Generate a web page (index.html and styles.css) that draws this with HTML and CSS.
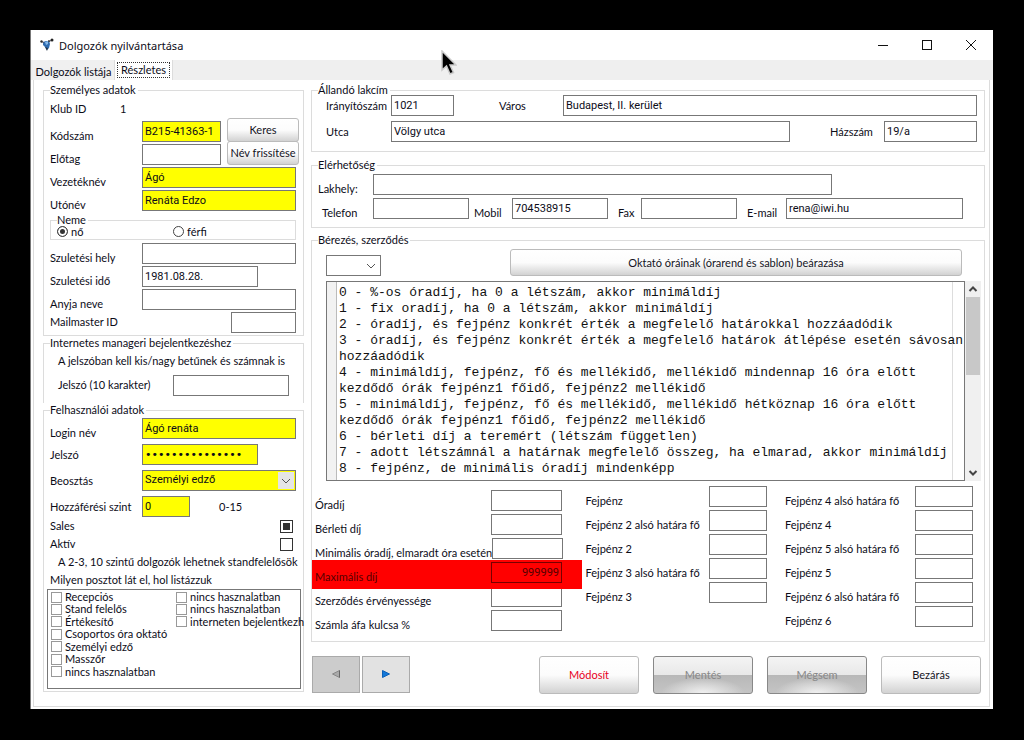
FILE: index.html
```html
<!DOCTYPE html>
<html lang="hu">
<head>
<meta charset="utf-8">
<title>Dolgozók nyilvántartása</title>
<link rel="stylesheet" href="styles.css">
</head>
<body>
<main class="window">
  <header class="titlebar">
    <svg class="app-icon" width="14" height="14" viewBox="0 0 14 14" aria-hidden="true">
      <path d="M3 4l3-1 3 0 1 3-1 4-2 2-2-3-2-2z" fill="#2f6cb0"/>
      <path d="M5 4l3-1 0 3-2 1z" fill="#86b8e8"/>
      <path d="M1 3.500l3 1M9 4l3-2.500" stroke="#556" fill="none"/>
      <circle cx="1.500" cy="3.500" r="1.200" fill="#333"/><circle cx="12" cy="2" r="1.500" fill="#222"/><circle cx="9" cy="3" r="1" fill="#444"/>
      <path d="M5 9l2 4 1-3z" fill="#234"/>
    </svg>
    <h1 class="title">Dolgozók nyilvántartása</h1>
    <div class="window-buttons">
      <button class="winbtn" type="button" aria-label="Kis méret"><svg width="12" height="12" viewBox="0 0 12 12"><path d="M1 6.500h10" stroke="#111" fill="none"/></svg></button>
      <button class="winbtn" type="button" aria-label="Teljes méret"><svg width="12" height="12" viewBox="0 0 12 12"><rect x="1.500" y="1.500" width="9" height="9" stroke="#111" fill="none"/></svg></button>
      <button class="winbtn" type="button" aria-label="Ablak bezárása"><svg width="12" height="12" viewBox="0 0 12 12"><path d="M1 1l10 10M11 1L1 11" stroke="#111" fill="none"/></svg></button>
    </div>
  </header>
  <nav class="tabs" role="tablist">
    <button class="tab" type="button" role="tab">Dolgozók listája</button>
    <button class="tab active" type="button" role="tab" aria-selected="true"><span class="tab-focus">Részletes</span></button>
  </nav>
  <form class="page" autocomplete="off">
    <div class="left">
      <fieldset class="group">
        <legend>Személyes adatok</legend>
        <div class="row club"><span class="label">Klub ID</span><span class="club-id">1</span></div>
        <div class="row low"><label class="label" for="kod">Kódszám</label><input id="kod" class="field code yellow" value="B215-41363-1"><button class="btn small" type="button">Keres</button></div>
        <div class="row low"><label class="label" for="elo">Előtag</label><input id="elo" class="field code"><button class="btn small" type="button">Név frissítése</button></div>
        <div class="row low"><label class="label" for="vez">Vezetéknév</label><input id="vez" class="field grow yellow" value="Ágó"></div>
        <div class="row low"><label class="label" for="uto">Utónév</label><input id="uto" class="field grow yellow" value="Renáta Edzo"></div>
        <fieldset class="group gender">
          <legend>Neme</legend>
          <label class="radio-item"><input class="radio" type="radio" name="neme" checked>nő</label>
          <label class="radio-item"><input class="radio" type="radio" name="neme">férfi</label>
        </fieldset>
        <div class="row low"><label class="label" for="hely">Szuletési hely</label><input id="hely" class="field grow"></div>
        <div class="row low"><label class="label" for="ido">Szuletési idő</label><input id="ido" class="field medium" value="1981.08.28."></div>
        <div class="row low"><label class="label" for="anya">Anyja neve</label><input id="anya" class="field grow"></div>
        <div class="row between"><label class="label" for="mail">Mailmaster ID</label><input id="mail" class="field tiny"></div>
      </fieldset>
      <fieldset class="group internet">
        <legend>Internetes manageri bejelentkezéshez</legend>
        <p class="note">A jelszóban kell kis/nagy betűnek és számnak is</p>
        <div class="row between web-password"><label for="jel10">Jelszó (10 karakter)</label><input id="jel10" class="field medium"></div>
      </fieldset>
      <fieldset class="group user">
        <legend>Felhasználói adatok</legend>
        <div class="user-rows">
          <div class="row low"><label class="label" for="login">Login név</label><input id="login" class="field grow yellow" value="Ágó renáta"></div>
          <div class="row"><label class="label" for="pw">Jelszó</label><input id="pw" type="password" class="field medium yellow password" value="123456789012345"></div>
          <div class="row"><label class="label" for="beo">Beosztás</label><span class="combo grow"><select id="beo" class="field yellow"><option>Személyi edző</option></select><svg class="chevron boxed" width="16" height="17" viewBox="0 0 16 17"><path d="M4 7l4 4 4-4" stroke="#555" fill="none"/></svg></span></div>
          <div class="row"><label class="label" for="szint">Hozzáférési szint</label><input id="szint" class="field level yellow" value="0"><span class="range">0-15</span></div>
        </div>
        <label class="check-row">Sales<input class="check large filled" type="checkbox"></label>
        <label class="check-row">Aktív<input class="check large" type="checkbox"></label>
        <p class="note line">A 2-3, 10 szintű dolgozók lehetnek standfelelősök</p>
        <p class="line">Milyen posztot lát el, hol listázzuk</p>
        <div class="posts">
          <label class="post"><input class="check" type="checkbox">Recepciós</label>
          <label class="post"><input class="check" type="checkbox">Stand felelős</label>
          <label class="post"><input class="check" type="checkbox">Értékesítő</label>
          <label class="post"><input class="check" type="checkbox">Csoportos óra oktató</label>
          <label class="post"><input class="check" type="checkbox">Személyi edző</label>
          <label class="post"><input class="check" type="checkbox">Masszőr</label>
          <label class="post"><input class="check" type="checkbox">nincs hasznalatban</label>
          <label class="post"><input class="check" type="checkbox">nincs hasznalatban</label>
          <label class="post"><input class="check" type="checkbox">nincs hasznalatban</label>
          <label class="post"><input class="check" type="checkbox">interneten bejelentkezh</label>
        </div>
      </fieldset>
    </div>

    <div class="right">
      <fieldset class="group address">
        <legend>Állandó lakcím</legend>
        <div class="row">
          <label class="address-label" for="irsz">Irányítószám</label><input id="irsz" class="field zip" value="1021">
          <label class="city-label" for="varos">Város</label><input id="varos" class="field grow" value="Budapest, II. kerület">
        </div>
        <div class="row">
          <label class="address-label" for="utca">Utca</label><input id="utca" class="field grow" value="Völgy utca">
          <label class="house-label" for="haz">Házszám</label><input id="haz" class="field house" value="19/a">
        </div>
      </fieldset>
      <fieldset class="group contact">
        <legend>Elérhetőség</legend>
        <div class="row low home"><label class="contact-label" for="lak">Lakhely:</label><input id="lak" class="field grow"></div>
        <div class="row low phones">
          <label class="contact-label phone" for="tel">Telefon</label><input id="tel" class="field number">
          <label class="mobile-label" for="mob">Mobil</label><input id="mob" class="field number" value="704538915">
          <label class="fax-label" for="fax">Fax</label><input id="fax" class="field number">
          <label class="email-label" for="email">E-mail</label><input id="email" class="field grow" value="rena@iwi.hu">
        </div>
      </fieldset>
      <fieldset class="group wages">
        <legend>Bérezés, szerződés</legend>
        <div class="wage-head">
          <span class="combo mode"><select class="field" aria-label="Bérezés módja"><option></option></select><svg class="chevron" width="16" height="17" viewBox="0 0 16 17"><path d="M4 7l4 4 4-4" stroke="#555" fill="none"/></svg></span>
          <button class="btn price" type="button">Oktató óráinak (órarend és sablon) beárazása</button>
        </div>
        <div class="memo">
          <textarea class="memo-text" aria-label="Bérezési módok" readonly wrap="off">0 - %-os óradíj, ha 0 a létszám, akkor minimáldíj
1 - fix oradíj, ha 0 a létszám, akkor minimáldíj
2 - óradíj, és fejpénz konkrét érték a megfelelő határokkal hozzáadódik
3 - óradíj, és fejpénz konkrét érték a megfelelő határok átlépése esetén sávosan
hozzáadódik
4 - minimáldíj, fejpénz, fő és mellékidő, mellékidő mindennap 16 óra előtt
kezdődő órák fejpénz1 főidő, fejpénz2 mellékidő
5 - minimáldíj, fejpénz, fő és mellékidő, mellékidő hétköznap 16 óra előtt
kezdődő órák fejpénz1 főidő, fejpénz2 mellékidő
6 - bérleti díj a teremért (létszám független)
7 - adott létszámnál a határnak megfelelő összeg, ha elmarad, akkor minimáldíj
8 - fejpénz, de minimális óradíj mindenképp</textarea>
          <div class="scrollbar" aria-hidden="true">
            <svg width="16" height="16" viewBox="0 0 16 16"><path d="M4.500 10L8 6.500l3.500 3.500" stroke="#444" stroke-width="2" fill="none"/></svg>
            <span class="thumb"></span>
            <svg class="scroll-down" width="16" height="16" viewBox="0 0 16 16"><path d="M4.500 6L8 9.500 11.500 6" stroke="#444" stroke-width="2" fill="none"/></svg>
          </div>
        </div>
        <div class="rates">
          <div class="rate-col first">
            <div class="rate"><label for="r1">Óradíj</label><input id="r1" class="field"></div>
            <div class="rate"><label for="r2">Bérleti díj</label><input id="r2" class="field"></div>
            <div class="rate"><label for="r3">Minimális óradíj, elmaradt óra esetén</label><input id="r3" class="field"></div>
            <div class="rate alert"><label for="r4">Maximális díj</label><input id="r4" class="field" value="999999"></div>
            <div class="rate"><label for="r5">Szerződés érvényessége</label><input id="r5" class="field"></div>
            <div class="rate"><label for="r6">Számla áfa kulcsa %</label><input id="r6" class="field"></div>
          </div>
          <div class="rate-col second">
            <div class="rate"><label for="f1">Fejpénz</label><input id="f1" class="field"></div>
            <div class="rate"><label for="f2">Fejpénz 2 alsó határa fő</label><input id="f2" class="field"></div>
            <div class="rate"><label for="f3">Fejpénz 2</label><input id="f3" class="field"></div>
            <div class="rate"><label for="f4">Fejpénz 3 alsó határa fő</label><input id="f4" class="field"></div>
            <div class="rate"><label for="f5">Fejpénz 3</label><input id="f5" class="field"></div>
          </div>
          <div class="rate-col">
            <div class="rate"><label for="g1">Fejpénz 4 alsó határa fő</label><input id="g1" class="field"></div>
            <div class="rate"><label for="g2">Fejpénz 4</label><input id="g2" class="field"></div>
            <div class="rate"><label for="g3">Fejpénz 5 alsó határa fő</label><input id="g3" class="field"></div>
            <div class="rate"><label for="g4">Fejpénz 5</label><input id="g4" class="field"></div>
            <div class="rate"><label for="g5">Fejpénz 6 alsó határa fő</label><input id="g5" class="field"></div>
            <div class="rate"><label for="g6">Fejpénz 6</label><input id="g6" class="field"></div>
          </div>
        </div>
      </fieldset>
      <div class="footer">
        <div class="pager">
          <button class="nav-btn off" type="button" aria-label="Előző" disabled><svg width="10" height="10" viewBox="0 0 10 10"><path d="M8.500 1.500v7L1.500 5z" fill="#aaa" stroke="#888"/><path d="M8.500 1.500v7" stroke="#666"/></svg></button>
          <button class="nav-btn" type="button" aria-label="Következő"><svg width="10" height="10" viewBox="0 0 10 10"><path d="M1.500 1.500v7L8.500 5z" fill="#1277d8" stroke="#0a60b8"/></svg></button>
        </div>
        <div class="actions">
          <button class="btn action modify" type="button">Módosít</button>
          <button class="btn action" type="button" disabled>Mentés</button>
          <button class="btn action" type="button" disabled>Mégsem</button>
          <button class="btn action" type="button">Bezárás</button>
        </div>
      </div>
    </div>
  </form>
  <svg class="cursor" width="16" height="26" viewBox="0 0 16 26" aria-hidden="true"><path d="M1 1v19l4.500-4 3.500 8 3.500-1.500L9 15h6z" fill="#000" stroke="#ccc" stroke-width="1.500"/></svg>
</main>
</body>
</html>
```
FILE: styles.css
```css
* { box-sizing: border-box; }

body {
  margin: 0;
  min-height: 100vh;
  padding: 30px 31px 31px 30px;
  display: flex;
  background: #000;
  color: #0c0c18;
  font: 11px/14px Lato, "Noto Sans", sans-serif;
}

p { margin: 0; }
input, select, button, textarea { margin: 0; font: inherit; color: inherit; }
label, .label, p, legend, button { white-space: nowrap; }

.window {
  position: relative;
  flex: 1;
  min-width: 0;
  display: flex;
  flex-direction: column;
  background: #fff;
  border-left: 1px solid #777;
}

.titlebar { display: flex; align-items: center; height: 30px; padding-left: 9px; }
.title { margin: 0 auto 0 5px; padding-top: 2px; font: 400 11px/14px "Noto Sans", "Open Sans", sans-serif; }
.window-buttons { display: flex; }
.winbtn {
  display: flex;
  align-items: center;
  justify-content: center;
  width: 44px;
  height: 30px;
  padding: 0;
  border: 0;
  background: none;
}

.tabs { display: flex; height: 20px; padding-left: 2px; background: #efefef; }
.tab { width: 82px; padding: 3px 0 0; border: 1px solid #dcdcdc; border-width: 0 1px 0 0; background: #f0f0f0; }
.tab.active { width: 58px; padding: 1px 2px; background: #fff; }
.tab-focus { display: block; border: 1px dotted #333; }

.page {
  flex: 1;
  display: flex;
  gap: 7px;
  margin: 0 3px 2px 2px;
  padding: 3px 4px 4px 9px;
  border: 1px solid #dcdcdc;
  border-top: 0;
}
.left { width: 261px; flex: none; }
.right { flex: 1; min-width: 0; }

.group {
  min-width: 0;
  margin: 0;
  padding: 0 7px 0 6px;
  border: 1px solid #dcdcdc;
}
.group > legend { height: 14px; padding: 0 2px 0 0; }

.row { display: flex; align-items: center; }
.row.low { align-items: flex-start; height: 23px; }
.row.low > label { padding-top: 8px; }
.row.between { justify-content: space-between; height: 23px; align-items: flex-start; }
.row.between > label { padding-top: 3px; }
.label { flex: none; width: 92px; }
.club { height: 24px; }
.club-id { margin-left: -22px; }

.field {
  height: 21px;
  min-width: 0;
  padding: 0 2px 1px;
  border: 1px solid #777;
  border-radius: 0;
  background: #fff;
  font-family: Roboto, "Noto Sans", sans-serif;
  outline: 0;
  appearance: none;
}
.grow { flex: 1; }
.yellow { background: #ff0; }
.code { width: 79px; }
.medium { width: 116px; }
.tiny { width: 65px; }
.level { width: 48px; }

.btn {
  padding: 0;
  border: 1px solid #bbb;
  border-radius: 3px;
  background: linear-gradient(#fff 0%, #fcfcfc 50%, #d2d2d2 100%);
  color: #14141e;
}
.btn.small { flex: none; width: 72px; height: 24px; margin: -3px -3px 0 6px; }

.gender { display: flex; height: 27px; margin: 0 0 3px 0; padding: 0 6px; }
.gender > legend { padding: 0 2px 0 0; }
.radio-item { display: flex; align-items: center; gap: 3px; width: 120px; height: 9px; }
.radio {
  width: 11px;
  height: 11px;
  border: 1px solid #444;
  border-radius: 50%;
  appearance: none;
}
.radio:checked { background: #333; box-shadow: inset 0 0 0 2px #fff; }

.internet { padding-left: 14px; padding-bottom: 5px; border-bottom: 0; }
.internet > legend { margin-left: -8px; }
.note { padding-left: 8px; }
.internet .note { padding: 4px 0 7px; }
.web-password { padding-right: 7px; }

.user-rows { display: grid; grid-template-columns: minmax(0, 1fr); gap: 5px; padding-top: 1px; }
.user-rows .row, .user-rows .row.low { height: 21px; }
.password { font-family: "DejaVu Sans", sans-serif; }
.combo { position: relative; display: flex; }
.combo select { width: 100%; }
.chevron { position: absolute; top: 2px; right: 2px; pointer-events: none; }
.chevron.boxed { background: #e5e5e5; }
.range { margin-left: 29px; }

.check-row { display: flex; align-items: center; justify-content: space-between; height: 18px; padding-right: 3px; }
.line { line-height: 18px; }
.check { flex: none; width: 11px; height: 11px; margin: 0; border: 1px solid #999; background: #fff; appearance: none; }
.check.large { width: 13px; height: 13px; border-color: #333; }
.check.filled { background: #333; box-shadow: inset 0 0 0 2px #fff; }
.posts {
  display: grid;
  grid-template-rows: repeat(7, 1fr);
  grid-template-columns: 125px 1fr;
  grid-auto-flow: column;
  height: 100px;
  margin: 0 -5px 2px -3px;
  padding: 1px 0 10px 3px;
  border: 1px solid #777;
}
.post { display: flex; align-items: center; gap: 3px; height: 12px; line-height: 12px; }

.address { padding: 0 7px 9px 14px; }
.address > legend { margin-left: -8px; }
.address .row + .row { margin-top: 5px; }
.address legend + .row { margin-top: -2px; }
.address-label { flex: none; width: 65px; }
.zip { width: 63px; }
.city-label { width: 64px; margin-left: 45px; }
.house-label { width: 54px; margin-left: 40px; }
.house { width: 93px; }

.contact { margin-top: 6px; padding: 2px 21px 6px 6px; }
.contact-label { flex: none; width: 55px; }
.contact-label.phone { padding-left: 4px; }
.row.home { height: 24px; padding-right: 131px; }
.number { flex: none; width: 96px; }
.mobile-label { width: 38px; margin-left: 5px; }
.fax-label { width: 23px; margin-left: 10px; }
.email-label { width: 39px; margin-left: 10px; }

.wages { margin-top: 5px; padding: 2px 3px 7px; }
.wages > legend { margin-left: 3px; }
.wage-head { display: flex; align-items: flex-end; gap: 129px; padding: 0 19px 5px 11px; }
.mode { flex: none; width: 55px; }
.price { flex: 1; height: 27px; }

.memo { display: flex; height: 200px; margin-left: 11px; }
.memo-text {
  flex: 1;
  min-width: 0;
  padding: 3px 0 0 12px;
  border: 1px solid #777;
  background: linear-gradient(90deg, #f2f2f2 9px, #bbb 9px, #bbb 10px, #fff 10px, #fff calc(100% - 12px), #ddd calc(100% - 12px), #ddd calc(100% - 11px), #fff calc(100% - 11px));
  color: #111;
  font: 13px/16px "Liberation Mono", monospace;
  overflow: hidden;
  resize: none;
  outline: 0;
}
.scrollbar { display: flex; flex-direction: column; width: 16px; background: #f0f0f0; }
.thumb { height: 78px; margin: 0 1px; background: #c8c8c8; }
.scroll-down { margin-top: auto; }

.rates { display: flex; justify-content: space-between; padding: 5px 8px 0 0; }
.rate-col { width: 188px; }
.rate-col.second { width: 181px; margin-left: 5px; }
.rate-col.first { width: 247px; padding-top: 4px; }
.rate { display: flex; justify-content: space-between; height: 24px; }
.rate label { padding-top: 8px; }
.rate .field { flex: none; width: 58px; }
.rate-col.first .field { width: 71px; }
.rate.alert {
  position: relative;
  z-index: 1;
  height: 29px;
  margin: -2px -20px -3px -3px;
  padding: 2px 20px 3px 3px;
  background: #f00;
  color: #500;
}
.alert .field { border-color: #700; background: transparent; text-align: right; }

.footer { display: flex; justify-content: space-between; gap: 14px; padding: 14px 4px 0 1px; }
.pager { display: flex; gap: 2px; }
.nav-btn { width: 48px; height: 37px; padding: 0; border: 1px solid #aaa; background: #e2e2e2; }
.nav-btn.off { background: #ccc; }
.actions { display: flex; gap: 14px; }
.action { width: 100px; height: 38px; }
.modify { color: #e8001c; }
.action:disabled {
  border-color: #888;
  background:
    radial-gradient(ellipse at 50% 100%, #f0f0f0, transparent 60%) 0 100% / 100% 50% no-repeat,
    linear-gradient(#f4f4f4 0%, #e8e8e8 50%, #b8b8b8 50%, #c4c4c4 100%);
  color: #888;
}

.cursor { position: absolute; top: 20px; left: 410px; }
```
